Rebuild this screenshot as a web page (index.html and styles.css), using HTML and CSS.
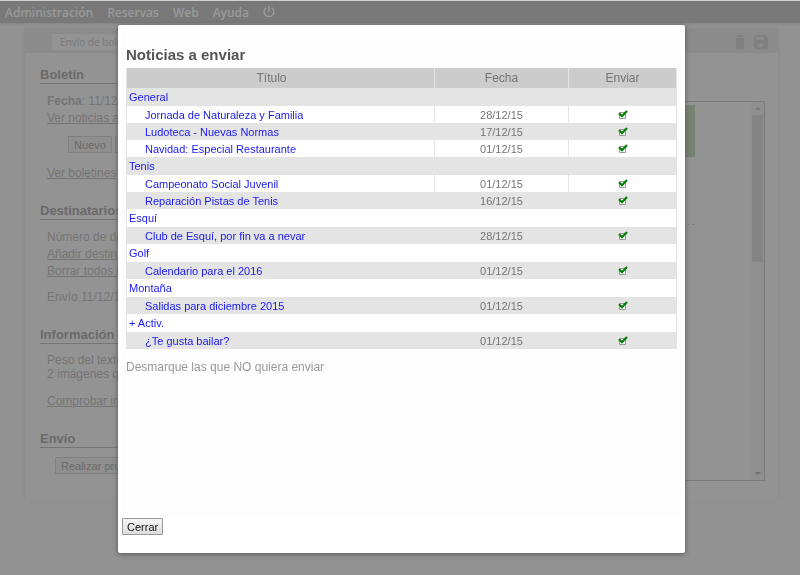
FILE: index.html
```
<!DOCTYPE html>
<html lang="es">

<head>
  <meta charset="UTF-8">
  <meta name="viewport" content="width=device-width, initial-scale=1">
  <title>Noticias a enviar</title>
  <link rel="stylesheet" href="styles.css">
</head>

<body>
  <nav class="menu">
    <a href="#">Administración</a>
    <a href="#">Reservas</a>
    <a href="#">Web</a>
    <a href="#">Ayuda</a>
    <a href="#" class="power" aria-label="Salir">
      <svg width="12" height="12" viewBox="0 0 12 12" fill="none" stroke="currentColor" stroke-width="1.6">
        <path d="M6 0v6M3 1.8a4.9 4.9 0 1 0 6 0" />
      </svg>
    </a>
  </nav>

  <main class="panel">
    <div class="toolbar">
      <a href="#" class="tab">Envío de bole</a>
      <div class="tools">
        <button type="button" class="tool" aria-label="Borrar">
          <svg width="12" height="14" viewBox="0 0 12 14" fill="currentColor">
            <path d="M1 1h3l1-1h2l1 1h3v1H1zM2 3h8v10l-1 1H3l-1-1z" />
          </svg>
        </button>
        <button type="button" class="tool" aria-label="Guardar">
          <svg width="14" height="14" viewBox="0 0 14 14" fill="currentColor" fill-rule="evenodd">
            <path d="M1 0h10l3 3v10l-1 1H1l-1-1V1zM2 2v3h8V2zM7 8a2.4 2.4 0 1 0 .01 0z" />
          </svg>
        </button>
      </div>
    </div>

    <div class="columns">
      <div class="data">
        <section>
          <h2>Boletín</h2>
          <p><b>Fecha</b>: 11/12/</p>
          <p><a href="#">Ver noticias a</a></p>
          <div class="buttons">
            <button type="button">Nuevo</button>
            <button type="button" class="edit" aria-label="Editar"></button>
          </div>
          <p><a href="#">Ver boletines </a></p>
        </section>
        <section>
          <h2>Destinatarios</h2>
          <p>Número de de</p>
          <p><a href="#">Añadir destina</a></p>
          <p><a href="#">Borrar todos l</a></p>
          <p class="apart">Envío 11/12/1</p>
        </section>
        <section>
          <h2>Información</h2>
          <p class="weight">Peso del texto<br>2 imágenes q</p>
          <p class="check-link"><a href="#">Comprobar im</a></p>
        </section>
        <section>
          <h2>Envío</h2>
          <div class="buttons test">
            <button type="button">Realizar pru</button>
          </div>
        </section>
      </div>

      <div class="preview">
        <div class="page">
          <div class="banner"></div>
          <div class="dashes"></div>
        </div>
        <div class="scroll">
          <span class="arrow up"></span>
          <span class="thumb"></span>
          <span class="arrow down"></span>
        </div>
      </div>
    </div>
  </main>

  <div class="overlay">
    <div class="dialog" role="dialog" aria-labelledby="dialog-title">
      <div class="content">
        <h1 id="dialog-title">Noticias a enviar</h1>
        <table>
          <thead>
            <tr>
              <th class="title">Título</th>
              <th class="date">Fecha</th>
              <th>Enviar</th>
            </tr>
          </thead>
          <tbody>
            <tr class="group"><td colspan="3">General</td></tr>
            <tr>
              <td><a href="#" id="n1">Jornada de Naturaleza y Familia</a></td>
              <td>28/12/15</td>
              <td><input type="checkbox" aria-labelledby="n1" checked></td>
            </tr>
            <tr>
              <td><a href="#" id="n2">Ludoteca - Nuevas Normas</a></td>
              <td>17/12/15</td>
              <td><input type="checkbox" aria-labelledby="n2" checked></td>
            </tr>
            <tr>
              <td><a href="#" id="n3">Navidad: Especial Restaurante</a></td>
              <td>01/12/15</td>
              <td><input type="checkbox" aria-labelledby="n3" checked></td>
            </tr>
            <tr class="group"><td colspan="3">Tenis</td></tr>
            <tr>
              <td><a href="#" id="n4">Campeonato Social Juvenil</a></td>
              <td>01/12/15</td>
              <td><input type="checkbox" aria-labelledby="n4" checked></td>
            </tr>
            <tr>
              <td><a href="#" id="n5">Reparación Pistas de Tenis</a></td>
              <td>16/12/15</td>
              <td><input type="checkbox" aria-labelledby="n5" checked></td>
            </tr>
            <tr class="group"><td colspan="3">Esquí</td></tr>
            <tr>
              <td><a href="#" id="n6">Club de Esquí, por fin va a nevar</a></td>
              <td>28/12/15</td>
              <td><input type="checkbox" aria-labelledby="n6" checked></td>
            </tr>
            <tr class="group"><td colspan="3">Golf</td></tr>
            <tr>
              <td><a href="#" id="n7">Calendario para el 2016</a></td>
              <td>01/12/15</td>
              <td><input type="checkbox" aria-labelledby="n7" checked></td>
            </tr>
            <tr class="group"><td colspan="3">Montaña</td></tr>
            <tr>
              <td><a href="#" id="n8">Salidas para diciembre 2015</a></td>
              <td>01/12/15</td>
              <td><input type="checkbox" aria-labelledby="n8" checked></td>
            </tr>
            <tr class="group"><td colspan="3">+ Activ.</td></tr>
            <tr>
              <td><a href="#" id="n9">¿Te gusta bailar?</a></td>
              <td>01/12/15</td>
              <td><input type="checkbox" aria-labelledby="n9" checked></td>
            </tr>
          </tbody>
        </table>
        <p class="note">Desmarque las que NO quiera enviar</p>
      </div>
      <button type="button" class="close">Cerrar</button>
    </div>
  </div>
</body>

</html>
```
FILE: styles.css
```
* {
  box-sizing: border-box;
}

body {
  margin: 0;
  background: #929292;
  color: #757575;
  font-family: "Liberation Sans", Arial, sans-serif;
  font-size: 12px;
}

h1,
h2,
p {
  margin: 0;
}

/* menu */
.menu {
  display: flex;
  align-items: center;
  gap: 14px;
  height: 23px;
  padding: 0 5px;
  border-top: 1px solid #cfd1d1;
  background: #797979;
  box-shadow: 0 1px 2px #858585;
  font-family: "Open Sans", Verdana, sans-serif;
  font-size: 12px;
  font-weight: 600;
}

.menu a {
  color: #999;
  text-decoration: none;
}

.power svg {
  display: block;
}

/* page behind the dialog */
.panel {
  margin: 7px 22px 0 25px;
  padding-bottom: 18px;
  background: #939393;
  box-shadow: 0 0 4px #868686;
}

.toolbar {
  display: flex;
  align-items: center;
  justify-content: space-between;
  height: 23px;
  padding: 0 10px 0 27px;
  background: #8b8b8b;
}

.tab {
  padding: 0 8px;
  background: #939393;
  color: #787878;
  font-family: "Open Sans", Verdana, sans-serif;
  font-size: 10px;
  line-height: 16px;
  text-decoration: none;
}

.tools {
  display: flex;
  gap: 8px;
}

.tool {
  padding: 0;
  border: 0;
  background: none;
  color: #808080;
}

.tool svg {
  display: block;
}

.columns {
  display: grid;
  grid-template-columns: 1fr 2fr;
  gap: 24px;
  padding: 0 13px 0 15px;
}

.data {
  padding-bottom: 7px;
}

.data section {
  padding-top: 13px;
}

.data section + section {
  padding-top: 20px;
}

.data h2 {
  margin-bottom: 9px;
  border-bottom: 1px solid #757575;
  color: #6a6a6a;
  font-size: 13px;
  line-height: 17px;
}

.data p {
  padding-left: 7px;
  line-height: 17px;
  white-space: nowrap;
}

.data a {
  color: inherit;
}

.data .apart {
  padding-top: 9px;
}

.data .weight {
  line-height: 14px;
}

.data .check-link {
  padding-top: 12px;
}

.buttons {
  display: flex;
  gap: 3px;
  padding: 9px 0 12px 28px;
}

.test {
  padding: 0 0 0 15px;
}

.buttons button {
  height: 17px;
  padding: 0 5px;
  border: 1px solid #808080;
  background: #8f8f8f;
  color: #6a6a6a;
  font: 11px "Liberation Sans", Arial, sans-serif;
}

.buttons .edit {
  width: 48px;
}

.preview {
  display: flex;
  margin-top: 48px;
  border: 1px solid #7a7a7a;
}

.page {
  flex: 1;
  padding: 3px 56px 0 8px;
}

.banner {
  height: 52px;
  background: #758371;
}

.dashes {
  margin-top: 67px;
  border-top: 1px dashed #838383;
}

.scroll {
  display: flex;
  flex-direction: column;
  align-items: center;
  width: 13px;
  padding: 5px 1px;
  background: #8f8f8f;
}

.arrow {
  border: 3px solid transparent;
}

.up {
  border-top: 0;
  border-bottom-color: #7a7a7a;
}

.down {
  margin-top: auto;
  border-bottom: 0;
  border-top-color: #6f6f6f;
}

.thumb {
  width: 100%;
  height: 40%;
  margin-top: 5px;
  background: #848484;
}

/* dialog */
.overlay {
  position: fixed;
  inset: 0;
  display: flex;
  padding: 25px 115px 22px 118px;
}

.dialog {
  display: flex;
  flex: 1;
  flex-direction: column;
  align-items: flex-start;
  padding: 4px 4px 18px;
  border-radius: 2px;
  background: #fff;
  box-shadow: 0 1px 5px #555;
}

.content {
  flex: 1;
  width: 100%;
  padding: 16px 4px 0;
  background: #fdfdfd;
}

.content h1 {
  margin-bottom: 4px;
  color: #555;
  font-size: 15px;
  line-height: 19px;
}

table {
  width: 100%;
  table-layout: fixed;
  border-collapse: collapse;
  background: #fff;
  font-size: 11px;
  text-align: center;
}

th,
td {
  height: 17px;
  padding: 1px 0 0;
  border: solid #e4e4e4;
  border-width: 0 1px;
  line-height: 16px;
}

th {
  height: 20px;
  padding: 0;
  background: #ccc;
  color: #757575;
  font-size: 12px;
  font-weight: normal;
  line-height: 20px;
}

.title {
  padding-right: 18px;
}

.date {
  width: 134px;
}

th:last-child {
  width: 108px;
}

tbody tr:nth-child(odd) {
  background: #e4e4e4;
}

td:first-child {
  padding-left: 18px;
  text-align: left;
}

td a {
  color: #1a1aee;
  text-decoration: none;
}

.group td {
  height: 18px;
  color: #1a1aee;
  line-height: 17px;
}

.group td:first-child {
  padding-left: 2px;
}

td input {
  display: block;
  width: 10px;
  height: 10px;
  margin: 0 auto;
  appearance: none;
  background: url("data:image/svg+xml,%3Csvg xmlns='http://www.w3.org/2000/svg' viewBox='0 0 10 10'%3E%3Cpath d='M1.5 2.5h6v6h-6z' fill='%23fff' stroke='%23999'/%3E%3C/svg%3E");
}

td input:checked {
  background-image: url("data:image/svg+xml,%3Csvg xmlns='http://www.w3.org/2000/svg' viewBox='0 0 10 10'%3E%3Cpath d='M1.5 2.5h6v6h-6z' fill='%23fff' stroke='%23999'/%3E%3Cpath d='M1 3.2l3 3L9 1' fill='none' stroke='%23008000' stroke-width='2.2'/%3E%3C/svg%3E");
}

.note {
  margin-top: 10px;
  color: #999;
  line-height: 17px;
}

.close {
  height: 17px;
  margin-top: 2px;
  padding: 0 4px;
  border: 1px solid #999;
  border-radius: 1px;
  background: linear-gradient(#f6f6f6, #ddd);
  color: #111;
  font: 11px "Liberation Sans", Arial, sans-serif;
}
```
